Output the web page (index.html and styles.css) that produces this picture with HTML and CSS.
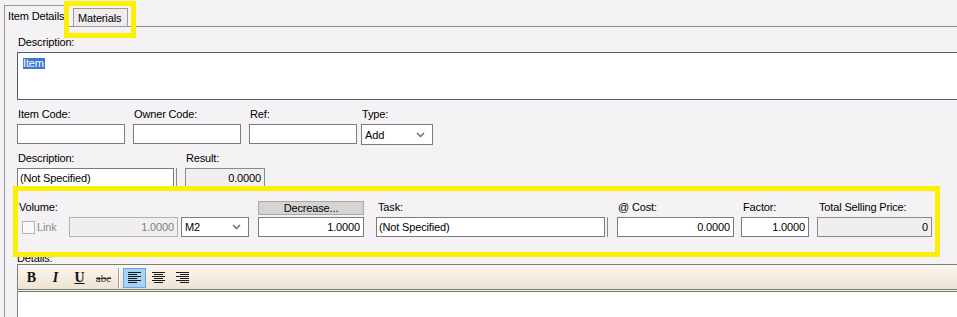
FILE: index.html
```html
<!DOCTYPE html>
<html lang="en">
<head>
  <meta charset="UTF-8">
  <meta name="viewport" content="width=device-width, initial-scale=1.0">
  <title>Item Details</title>
  <link rel="stylesheet" href="styles.css">
</head>
<body>
  <div class="tabstrip">
    <div class="tab tab-active">Item Details</div>
    <div class="tab-gap"></div>
    <div class="tab">Materials</div>
    <div class="tab-fill"></div>
  </div>

  <div class="panel">
    <div class="field">
      <label>Description:</label>
      <div class="memo"><span class="sel">Item</span></div>
    </div>

    <div class="row row-codes">
      <div class="field"><label>Item Code:</label><input type="text" class="box w-code"></div>
      <div class="field gap8"><label>Owner Code:</label><input type="text" class="box w-code"></div>
      <div class="field gap8"><label>Ref:</label><input type="text" class="box w-code"></div>
      <div class="field gap4">
        <label>Type:</label>
        <div class="select w-type">
          <span>Add</span>
          <svg class="chev" width="9" height="6" viewBox="0 0 9 6"><polyline points="1,1 4.5,4.5 8,1" fill="none" stroke="#5f6f8c" stroke-width="1.5"/></svg>
        </div>
      </div>
    </div>

    <div class="row row-desc">
      <div class="field">
        <label>Description:</label>
        <div class="lookup"><input type="text" class="box w-desc" value="(Not Specified)"><span class="lookup-edge"></span></div>
      </div>
      <div class="field gap8">
        <label>Result:</label>
        <input type="text" class="box num grey w-result" value="0.0000">
      </div>
    </div>

    <div class="row row-volume">
      <div class="field">
        <label class="pad2">Volume:</label>
        <div class="controls">
          <div class="linkbox"><span class="check"></span><span class="link-text">Link</span></div>
          <input type="text" class="box num grey off w-vol" value="1.0000">
          <div class="select w-unit">
            <span>M2</span>
            <svg class="chev" width="9" height="6" viewBox="0 0 9 6"><polyline points="1,1 4.5,4.5 8,1" fill="none" stroke="#5f6f8c" stroke-width="1.5"/></svg>
          </div>
        </div>
      </div>
      <div class="field gap9">
        <button class="btn-decrease">Decrease...</button>
        <input type="text" class="box num w-dec" value="1.0000">
      </div>
      <div class="field gap12">
        <label class="pad2">Task:</label>
        <div class="lookup"><input type="text" class="box w-task" value="(Not Specified)"><span class="lookup-edge"></span></div>
      </div>
      <div class="field gap9">
        <label>@ Cost:</label>
        <input type="text" class="box num w-cost" value="0.0000">
      </div>
      <div class="field gap7">
        <label class="pad2">Factor:</label>
        <input type="text" class="box num w-factor" value="1.0000">
      </div>
      <div class="field gap8">
        <label class="pad2">Total Selling Price:</label>
        <input type="text" class="box num grey w-total" value="0">
      </div>
    </div>

    <div class="details">
      <label>Details:</label>
      <div class="toolbar">
        <span class="tb-btn tb-b">B</span>
        <span class="tb-btn tb-i">I</span>
        <span class="tb-btn tb-u">U</span>
        <span class="tb-btn tb-s">abc</span>
        <span class="tb-sep"></span>
        <span class="tb-btn tb-on">
          <svg width="13" height="11" viewBox="0 0 13 11"><path d="M0 0.5H13M0 2.5H9M0 4.5H13M0 6.5H9M0 8.5H13M0 10.5H9" stroke="#1a1a1a" stroke-width="1"/></svg>
        </span>
        <span class="tb-btn">
          <svg width="13" height="11" viewBox="0 0 13 11"><path d="M0 0.5H13M2 2.5H11M0 4.5H13M2 6.5H11M0 8.5H13M2 10.5H11" stroke="#1a1a1a" stroke-width="1"/></svg>
        </span>
        <span class="tb-btn">
          <svg width="13" height="11" viewBox="0 0 13 11"><path d="M0 0.5H13M4 2.5H13M0 4.5H13M4 6.5H13M0 8.5H13M4 10.5H13" stroke="#1a1a1a" stroke-width="1"/></svg>
        </span>
      </div>
      <div class="editor"></div>
    </div>
  </div>

  <div class="mark mark-tab"></div>
  <div class="mark mark-row"></div>
</body>
</html>
```

FILE: styles.css
```css
body {
  margin: 0;
  width: 957px;
  height: 317px;
  overflow: hidden;
  position: relative;
  background-color: #f5f2f5;
  font-family: "Liberation Sans", Arial, sans-serif;
  font-size: 11px;
  letter-spacing: -0.15px;
  color: #000;
}

/* tabs */
.tabstrip {
  display: flex;
  align-items: flex-end;
  height: 27px;
  padding-left: 4px;
}
.tab {
  box-sizing: border-box;
  width: 55px;
  height: 19px;
  padding: 3px 0 0 4px;
  line-height: 13px;
  border: 1px solid #9a9a9a;
  background-color: #efecef;
  white-space: nowrap;
}
.tab-active {
  width: 63px;
  height: 22px;
  padding: 4px 0 0 3px;
  border-bottom: none;
  background-color: #f5f2f5;
}
.tab-gap, .tab-fill {
  box-sizing: border-box;
  height: 1px;
  border-bottom: 1px solid #8c8c8c;
}
.tab-gap { width: 6px; }
.tab-fill { flex: 1; }

.panel {
  margin-left: 4px;
  padding: 9px 0 0 12px;
  border-left: 1px solid #9a9a9a;
}

/* fields */
.field label {
  display: block;
  line-height: 13px;
  margin-bottom: 3px;
  padding-left: 1px;
  white-space: nowrap;
}
.field label.pad2 { padding-left: 2px; }
.row {
  display: flex;
  align-items: flex-start;
}
.row-codes { margin-top: 8px; }
.row-desc { margin-top: 7px; }
.row-volume { margin-top: 13px; }
.gap4 { margin-left: 4px; }
.gap7 { margin-left: 7px; }
.gap8 { margin-left: 8px; }
.gap9 { margin-left: 9px; }
.gap12 { margin-left: 12px; }

.memo {
  box-sizing: border-box;
  width: 950px;
  height: 48px;
  padding: 4px 0 0 5px;
  border: 1px solid #4f5d6a;
  background-color: #fff;
}
.sel {
  display: inline-block;
  line-height: 11px;
  padding: 0 1px 0 0;
  background-color: #3b78d3;
  color: #fff;
}

.box {
  display: block;
  box-sizing: border-box;
  height: 20px;
  margin: 0;
  padding: 0 3px 0 2px;
  border: 1px solid #7b7b7b;
  background-color: #fff;
  font: inherit;
  letter-spacing: inherit;
  color: inherit;
  outline: none;
}
.num { text-align: right; }
.grey {
  background-color: #f0eef0;
  border-color: #8a8a8a;
}
.off {
  color: #808080;
  border-color: #b0b0b0;
}
.w-code { width: 108px; }
.w-type { width: 72px; }
.w-desc { width: 157px; }
.w-result { width: 80px; }
.w-vol { width: 109px; }
.w-unit { width: 68px; margin-left: 3px; }
.w-dec { width: 106px; }
.w-task { width: 229px; }
.w-cost { width: 117px; }
.w-factor { width: 68px; }
.w-total { width: 115px; }

.select {
  box-sizing: border-box;
  height: 21px;
  display: flex;
  align-items: center;
  justify-content: space-between;
  padding: 0 7px 0 3px;
  border: 1px solid #7b7b7b;
  background-color: #fff;
}
.w-unit { height: 20px; }

.lookup {
  display: flex;
  align-items: stretch;
  height: 20px;
}
.lookup-edge {
  width: 1px;
  margin-left: 2px;
  background-color: #8a8a8a;
}

.controls {
  display: flex;
  align-items: center;
}
.linkbox {
  width: 47px;
  padding-left: 5px;
  display: flex;
  align-items: center;
}
.check {
  box-sizing: border-box;
  width: 13px;
  height: 13px;
  border: 1px solid #b5b5b5;
  background-color: #f9f9f9;
}
.link-text {
  margin-left: 2px;
  color: #8a8a8a;
}

.btn-decrease {
  display: block;
  box-sizing: border-box;
  width: 106px;
  height: 14px;
  margin: 0 0 2px 0;
  padding: 0;
  border: 1px solid #a8a8a8;
  background-color: #d6d3d0;
  font: inherit;
  letter-spacing: inherit;
  line-height: 12px;
  color: #000;
}

/* rich text editor */
.details { margin-top: 15px; }
.details label { margin-bottom: 2px; }
.toolbar {
  box-sizing: border-box;
  width: 950px;
  height: 28px;
  display: flex;
  align-items: center;
  padding: 1px 0 0 2px;
  border-top: 1px solid #7d7d7d;
  border-left: 1px solid #7d7d7d;
  border-bottom: 3px double #7a7570;
  background: linear-gradient(#fbf6f0, #ede3d4);
}
.tb-btn {
  box-sizing: border-box;
  width: 23px;
  height: 20px;
  margin-right: 1px;
  display: flex;
  align-items: center;
  justify-content: center;
  font-family: "Liberation Serif", "Times New Roman", serif;
  font-size: 14px;
  font-weight: bold;
  letter-spacing: 0;
  color: #111;
}
.tb-i { font-style: italic; }
.tb-u { text-decoration: underline; }
.tb-s {
  font-size: 11px;
  font-weight: normal;
  color: #333;
  text-decoration: line-through;
}
.tb-sep {
  width: 1px;
  height: 20px;
  margin: 0 3px 0 2px;
  background-color: #a59f98;
  border-right: 1px solid #fff;
}
.tb-on {
  border: 1px solid #6aa4db;
  background-color: #a6d2f6;
}
.editor {
  width: 950px;
  height: 40px;
  border-left: 1px solid #7d7d7d;
  background-color: #fff;
}

/* highlight boxes drawn over the form */
.mark {
  position: absolute;
  box-sizing: border-box;
  border: 5px solid #fbf000;
  pointer-events: none;
}
.mark-tab {
  left: 64px;
  top: 1px;
  width: 72px;
  height: 37px;
}
.mark-row {
  left: 13px;
  top: 186px;
  width: 927px;
  height: 71px;
}
```
